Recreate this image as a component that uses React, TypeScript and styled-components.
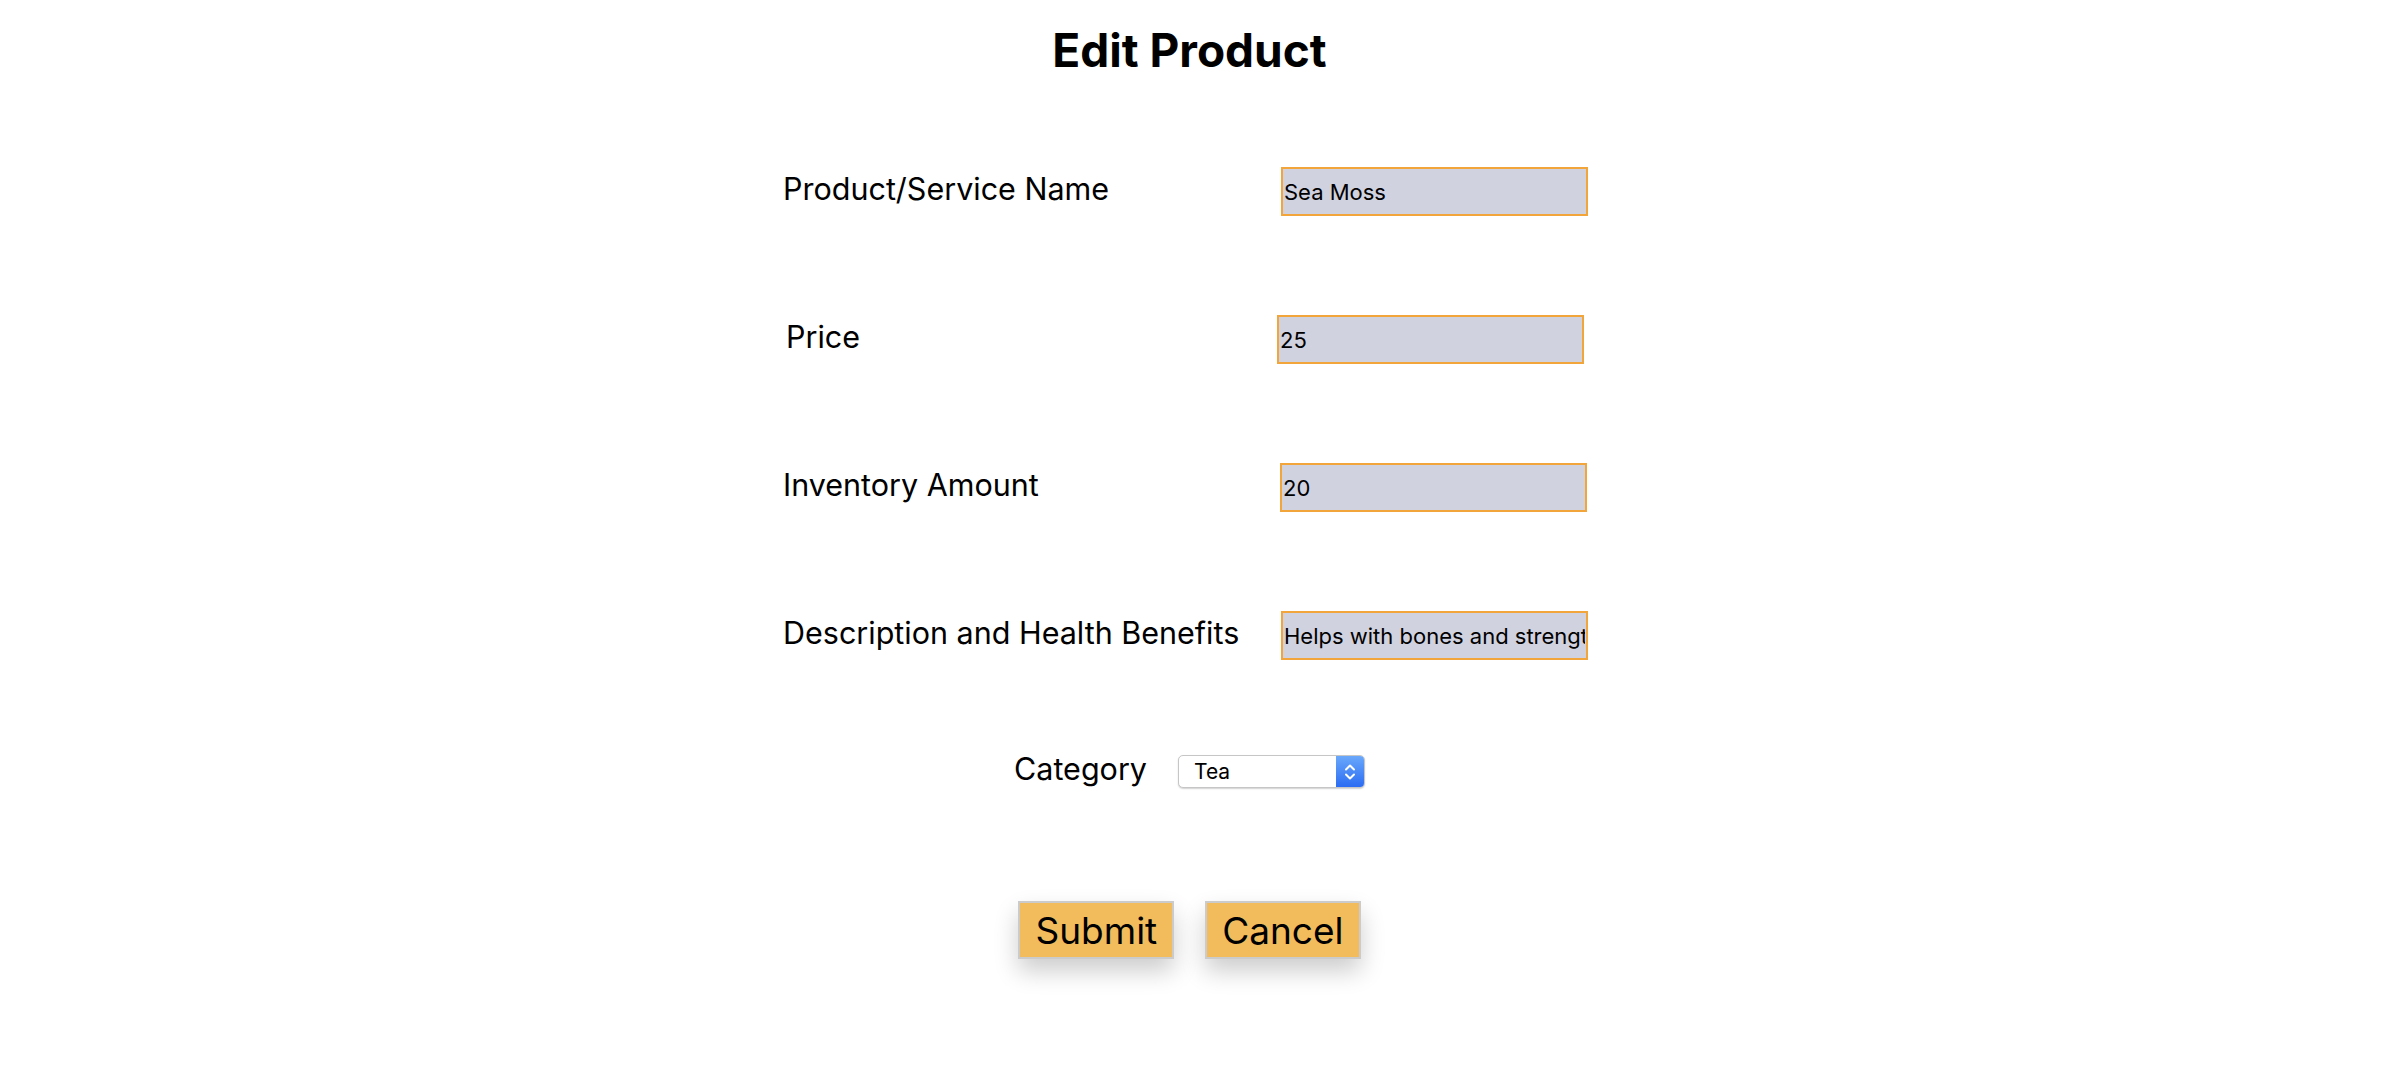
import React from "react";
import styled, { createGlobalStyle } from "styled-components";

const GlobalStyle = createGlobalStyle`
  html, body {
    margin: 0;
    padding: 0;
    background: #ffffff;
  }
  body {
    font-family: Inter, "Noto Sans", "Liberation Sans", sans-serif;
    color: #000000;
  }
`;

const Page = styled.main`
  display: flex;
  flex-direction: column;
  align-items: center;
  padding: 0 5px 80px 0;
`;

const Title = styled.h1`
  margin: 23px 0 0;
  font-size: 46px;
  line-height: 55px;
  font-weight: 700;
`;

const FormGrid = styled.form`
  display: grid;
  grid-template-columns: 498px 307px;
  grid-auto-rows: 49px;
  row-gap: 99px;
  align-items: center;
  margin: 89px 8px 0 0;
`;

const Label = styled.label<{ $shift?: number }>`
  font-size: 30.5px;
  line-height: 36px;
  padding-bottom: 5px;
  padding-left: ${(p) => p.$shift ?? 0}px;
  white-space: nowrap;
`;

const TextInput = styled.input<{ $shift?: number }>`
  box-sizing: border-box;
  width: 307px;
  height: 49px;
  margin: 0 0 0 ${(p) => p.$shift ?? 0}px;
  padding: 0 1px;
  border: 2px solid #f1a53a;
  border-radius: 0;
  background: #d0d2df;
  font-family: Inter, "Noto Sans", "Liberation Sans", sans-serif;
  font-size: 22px;
  color: #000;
  outline: none;
`;

const CategoryRow = styled.div`
  display: flex;
  align-items: center;
  gap: 31px;
  margin-top: 91px;
  height: 41px;
`;

const SelectBox = styled.div`
  position: relative;
  width: 187px;
  height: 33px;
  box-sizing: border-box;
  border: 1px solid #c6c6c6;
  border-radius: 5px;
  background: #ffffff;
  box-shadow: 0 1px 1.5px rgba(0, 0, 0, 0.18);
  overflow: hidden;
`;

const NativeSelect = styled.select`
  appearance: none;
  -webkit-appearance: none;
  width: 100%;
  height: 100%;
  border: none;
  margin: 0;
  padding: 0 30px 0 15px;
  background: transparent;
  font-family: Inter, "Noto Sans", "Liberation Sans", sans-serif;
  font-size: 21px;
  color: #000;
  outline: none;
`;

const ArrowCap = styled.span`
  position: absolute;
  top: 0;
  right: 0;
  bottom: 0;
  width: 28px;
  display: flex;
  align-items: center;
  justify-content: center;
  background: linear-gradient(#6aa8fb, #2b6cf3);
  pointer-events: none;
`;

const ButtonRow = styled.div`
  display: flex;
  gap: 31px;
  margin-top: 109px;
`;

const ActionButton = styled.button`
  box-sizing: border-box;
  height: 58px;
  padding: 0 15px;
  margin: 0;
  border: 2px solid #cbcbcb;
  border-radius: 0;
  background: #f2bb5b;
  font-family: Inter, "Noto Sans", "Liberation Sans", sans-serif;
  font-size: 37px;
  line-height: 1;
  color: #000;
  box-shadow: 0 12px 24px rgba(0, 0, 0, 0.2);
  cursor: pointer;
`;

const fields = [
  { label: "Product/Service Name", value: "Sea Moss", shift: 0, inputShift: 0 },
  { label: "Price", value: "25", shift: 3, inputShift: -4 },
  { label: "Inventory Amount", value: "20", shift: 0, inputShift: -1 },
  { label: "Description and Health Benefits", value: "Helps with bones and strength", shift: -2, inputShift: 0 },
];

export default function App() {
  return (
    <>
      <GlobalStyle />
      <Page>
        <Title>Edit Product</Title>
        <FormGrid onSubmit={(e) => e.preventDefault()}>
          {fields.map((f) => (
            <React.Fragment key={f.label}>
              <Label $shift={f.shift}>{f.label}</Label>
              <TextInput type="text" defaultValue={f.value} $shift={f.inputShift} />
            </React.Fragment>
          ))}
        </FormGrid>
        <CategoryRow>
          <Label>Category</Label>
          <SelectBox>
            <NativeSelect defaultValue="Tea">
              <option value="Tea">Tea</option>
              <option value="Herbs">Herbs</option>
              <option value="Supplements">Supplements</option>
            </NativeSelect>
            <ArrowCap>
              <svg width="12" height="20" viewBox="0 0 12 20" fill="none">
                <path d="M2 7.5 L6 3.5 L10 7.5" stroke="#fff" strokeWidth="2" strokeLinecap="round" strokeLinejoin="round" />
                <path d="M2 12.5 L6 16.5 L10 12.5" stroke="#fff" strokeWidth="2" strokeLinecap="round" strokeLinejoin="round" />
              </svg>
            </ArrowCap>
          </SelectBox>
        </CategoryRow>
        <ButtonRow>
          <ActionButton type="button">Submit</ActionButton>
          <ActionButton type="button">Cancel</ActionButton>
        </ButtonRow>
      </Page>
    </>
  );
}
